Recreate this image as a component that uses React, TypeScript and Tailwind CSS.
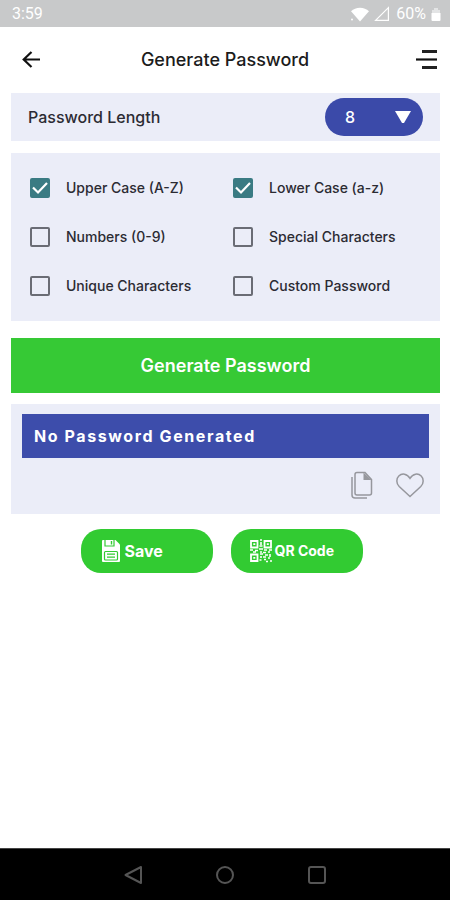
import type React from "react";
import { useState } from "react";

const options = [
  { id: "upper", label: "Upper Case (A-Z)" },
  { id: "lower", label: "Lower Case (a-z)" },
  { id: "numbers", label: "Numbers (0-9)" },
  { id: "special", label: "Special Characters" },
  { id: "unique", label: "Unique Characters" },
  { id: "custom", label: "Custom Password" },
];

const lengths = [6, 8, 10, 12, 16, 20, 24, 32];

const StatusBar: React.FC = () => (
  <div className="flex h-[27px] items-center justify-between bg-[#c8c9ca] pl-3 pr-2 font-['Roboto',sans-serif] text-base text-white">
    <span>3:59</span>
    <div className="flex items-center gap-1">
      <svg width="20" height="16" viewBox="0 0 20 16" fill="currentColor" aria-hidden="true">
        <path d="M10 15.5 1 5.2C3.4 3 6.5 1.8 10 1.8S16.6 3 19 5.2z" />
        <circle cx="2" cy="13.5" r="1" />
      </svg>
      <svg width="16" height="16" viewBox="0 0 16 16" fill="none" stroke="currentColor" strokeWidth="1.2" aria-hidden="true">
        <path d="M14.4 1.6v12.8H1.6z" />
      </svg>
      <span className="ml-0.5">60%</span>
      <svg width="12" height="16" viewBox="0 0 12 16" aria-hidden="true">
        <path d="M4 2h4v2h2v4H2V4h2z" fill="#e3e4e5" />
        <path d="M1.5 7h9v7a1 1 0 0 1-1 1h-7a1 1 0 0 1-1-1z" fill="#fff" />
      </svg>
    </div>
  </div>
);

const Header: React.FC = () => (
  <header className="flex h-[66px] items-center justify-between px-3">
    <button type="button" aria-label="Back" className="w-8 pl-2">
      <svg width="24" height="24" viewBox="0 0 24 24" fill="none" stroke="#111" strokeWidth="2.2" aria-hidden="true">
        <path d="M20 11.5H3.5M11.5 4 3.7 11.5l7.8 7.5" />
      </svg>
    </button>
    <h1 className="text-lg font-medium text-[#1c1c1c]">Generate Password</h1>
    <button type="button" aria-label="Menu" className="flex w-8 justify-end">
      <svg width="24" height="24" viewBox="0 0 24 24" fill="none" stroke="#222" strokeWidth="2.8" aria-hidden="true">
        <path d="M8 3.5h15M8 19.5h15" />
        <path d="M2 11.5h21" strokeWidth="2.2" stroke="#111" />
      </svg>
    </button>
  </header>
);

const SaveIcon: React.FC = () => (
  <svg width="20" height="24" viewBox="0 0 20 24" aria-hidden="true">
    <path d="M2 1h12.5L19 5.5V22a1 1 0 0 1-1 1H2a1 1 0 0 1-1-1V2a1 1 0 0 1 1-1z" fill="#fff" />
    <path d="M4 1v6h9V1" fill="none" stroke="#32cb32" strokeWidth="1.2" />
    <path d="M10.5 2v3.5" stroke="#32cb32" strokeWidth="1.4" />
    <rect x="3.5" y="12.5" width="13" height="8.5" rx="1" fill="none" stroke="#32cb32" strokeWidth="1.2" />
    <path d="M6 15.2h8M6 18.2h8" stroke="#32cb32" strokeWidth="1.3" />
  </svg>
);

const QrIcon: React.FC = () => (
  <svg width="24" height="24" viewBox="0 0 24 24" fill="none" stroke="#fff" strokeWidth="1.8" aria-hidden="true">
    <path d="M2 2h6.5v6.5H2zM15.5 2H22v6.5h-6.5zM2 15.5h6.5V22H2z" />
    <path d="M4.3 5.2h2M17.8 5.2h2M4.3 18.8h2" />
    <path
      d="M11 1h2M12 3v3M10.5 7h3M1 11h3M6 11.5h3M4 13h3M10 10h4M15 11h3M20 11h3M11 13h2M14 13.5h3M19 13h2M11 15h3M16 16h3M21 15v3M12 17v2M14 18h3M10.5 21h2M15 20.5h2M19 19h2M17 22.5h2M21 22h2"
      strokeWidth="1.6"
    />
  </svg>
);

const App: React.FC = () => {
  const [length, setLength] = useState(8);
  const [selected, setSelected] = useState<string[]>(["upper", "lower"]);
  const [liked, setLiked] = useState(false);

  const toggle = (id: string) => {
    setSelected((prev) =>
      prev.includes(id) ? prev.filter((item) => item !== id) : [...prev, id]
    );
  };

  return (
    <div className="flex min-h-screen flex-col bg-white font-['Inter','Liberation_Sans',sans-serif]">
      <StatusBar />
      <Header />

      <main className="flex flex-1 flex-col pl-[11px] pr-[10px]">
        {/* Length */}
        <section className="flex h-12 items-center justify-between bg-[#ebedf8] px-[17px]">
          <label htmlFor="length" className="text-base font-medium text-[#2b2b33]">
            Password Length
          </label>
          <div className="relative">
            <select
              id="length"
              value={length}
              onChange={(e) => setLength(Number(e.target.value))}
              className="block h-[38px] w-[98px] appearance-none rounded-full bg-[#3b4aa9] pl-5 pr-8 text-base font-medium text-white"
            >
              {lengths.map((value) => (
                <option key={value} value={value}>
                  {value}
                </option>
              ))}
            </select>
            <svg
              className="pointer-events-none absolute right-3 top-3"
              width="16"
              height="14"
              viewBox="0 0 16 14"
              fill="#fff"
              aria-hidden="true"
            >
              <path d="M0 1h16L9 13H7z" />
            </svg>
          </div>
        </section>

        {/* Character sets */}
        <section className="mt-3 grid h-42 grid-cols-2 content-center gap-y-[29px] bg-[#ebedf8] pl-[19px] pr-1">
          {options.map((option) => (
            <label key={option.id} className="flex items-center gap-4 text-sm leading-5 font-medium whitespace-nowrap text-[#2b2b33]">
              <span className="relative flex">
                <input
                  type="checkbox"
                  checked={selected.includes(option.id)}
                  onChange={() => toggle(option.id)}
                  className="peer size-5 appearance-none rounded-xs border-2 border-[#6a6c75] checked:border-[#3a7b83] checked:bg-[#3a7b83]"
                />
                <svg
                  className="pointer-events-none absolute inset-0 hidden peer-checked:block"
                  width="20"
                  height="20"
                  viewBox="0 0 20 20"
                  fill="none"
                  stroke="#fff"
                  strokeWidth="2.2"
                  aria-hidden="true"
                >
                  <path d="m3 9.5 5 5L17 5" />
                </svg>
              </span>
              {option.label}
            </label>
          ))}
        </section>

        <button type="button" className="mt-[17px] h-[55px] bg-[#36c935] text-lg font-semibold text-white">
          Generate Password
        </button>

        {/* Result */}
        <section className="mt-[11px] bg-[#ebedf8] px-[11px] pt-2.5 pb-3">
          <p className="flex h-11 items-center bg-[#3d4dab] px-3 text-base font-bold tracking-widest text-white">
            No Password Generated
          </p>
          <div className="mt-3 flex justify-end gap-5 pr-1 text-[#96979d]">
            <button type="button" aria-label="Copy password">
              <svg width="26" height="32" viewBox="0 0 26 32" fill="none" stroke="currentColor" strokeWidth="1.5" aria-hidden="true">
                <path d="M8 2.5h8l6.5 7V23a2 2 0 0 1-2 2H8a2 2 0 0 1-2-2V4.500a2 2 0 0 1 2-2z" />
                <path d="M14.500 2.500v7.500h8z" fill="currentColor" stroke="none" />
                <path d="M3 7v18a3 3 0 0 0 3 3h12" />
              </svg>
            </button>
            <button type="button" aria-label="Add to favourites" onClick={() => setLiked(!liked)}>
              <svg width="30" height="32" viewBox="0 0 30 32" fill={liked ? "currentColor" : "none"} stroke="currentColor" strokeWidth="1.5" aria-hidden="true">
                <path d="M15 26.500 4.200 16.500C1 13.300 1.200 8.500 3.800 6 7 2.900 12 3.500 15 8.300 18 3.500 23 2.900 26.200 6c2.600 2.500 2.800 7.300-.4 10.500z" />
              </svg>
            </button>
          </div>
        </section>

        {/* Actions */}
        <div className="mt-[15px] flex justify-center gap-[18px] pr-2 text-base font-bold text-white">
          <button type="button" className="flex h-11 w-[132px] items-center gap-1 rounded-[20px] bg-[#32cb32] pl-5">
            <SaveIcon />
            Save
          </button>
          <button type="button" className="flex h-11 w-[132px] items-center gap-0.5 rounded-[20px] bg-[#32cb32] pl-[18px] text-sm whitespace-nowrap">
            <QrIcon />
            QR Code
          </button>
        </div>
      </main>

      <nav className="flex h-13 items-center justify-center gap-[68px] border-t border-[#444] bg-black text-[#555]">
        <button type="button" aria-label="Back">
          <svg width="24" height="24" viewBox="0 0 24 24" fill="none" stroke="currentColor" strokeWidth="2" strokeLinejoin="round" aria-hidden="true">
            <path d="M20 4v16L4.500 12z" />
          </svg>
        </button>
        <button type="button" aria-label="Home">
          <svg width="24" height="24" viewBox="0 0 24 24" fill="none" stroke="currentColor" strokeWidth="2" aria-hidden="true">
            <circle cx="12" cy="12" r="8" />
          </svg>
        </button>
        <button type="button" aria-label="Recent apps">
          <svg width="24" height="24" viewBox="0 0 24 24" fill="none" stroke="currentColor" strokeWidth="2" aria-hidden="true">
            <rect x="4" y="4" width="16" height="16" rx="2" />
          </svg>
        </button>
      </nav>
    </div>
  );
};

export default App;
